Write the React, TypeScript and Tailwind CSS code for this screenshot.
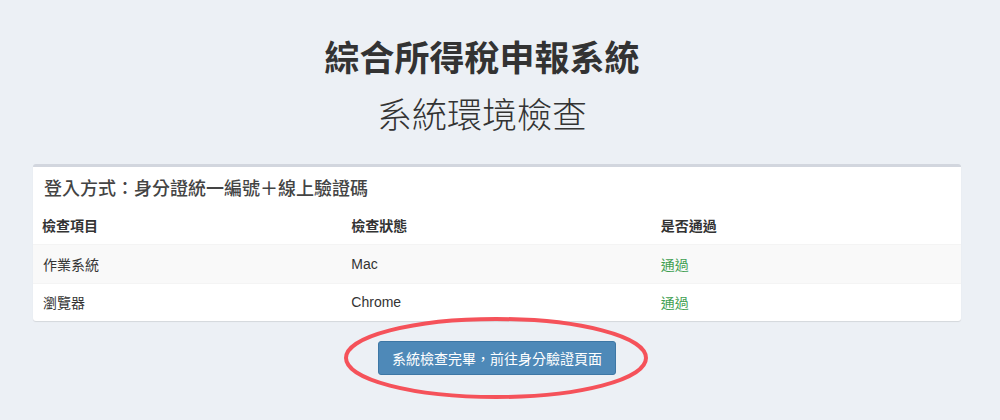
import React from 'react';

const ROWS = [
  { item: '作業系統', status: 'Mac', pass: '通過' },
  { item: '瀏覽器', status: 'Chrome', pass: '通過' },
];

const font = { fontFamily: '"Noto Sans CJK TC", "Liberation Sans", sans-serif' };

export default function App() {
  return (
    <div className="min-h-[420px] w-[1000px] bg-[#ecf0f5] text-[#333]" style={font}>
      <div className="pl-[33px] pr-[39px]">
        {/* Title */}
        <div className="pr-[30px] pt-[33px] text-center">
          <h1 className="text-[35px] font-bold leading-[46px] text-[#333]">綜合所得稅申報系統</h1>
          <h2 className="mt-[11px] text-[35px] font-light leading-[46px] text-[#333]">系統環境檢查</h2>
        </div>

        {/* Box */}
        <div className="mt-[28px] rounded-[3px] border-t-[3px] border-[#d2d6de] bg-white shadow-[0_1px_1px_rgba(0,0,0,0.1)]">
          <div className="flex h-[40px] items-center px-[11px]">
            <h3 className="text-[18px] font-medium leading-none text-[#444]">登入方式：身分證統一編號＋線上驗證碼</h3>
          </div>
          <div className="grid grid-cols-3 text-[14px]">
            {['檢查項目', '檢查狀態', '是否通過'].map((h) => (
              <div key={h} className="flex h-[38px] items-center border-b border-[#f4f4f4] px-[9px] font-bold text-[#333]">
                {h}
              </div>
            ))}
            {ROWS.map((r, i) => (
              <React.Fragment key={r.item}>
                <div className={`flex h-[38px] items-center px-[10px] ${i === 0 ? 'bg-[#f9f9f9]' : 'border-t border-[#f4f4f4]'}`}>{r.item}</div>
                <div className={`flex h-[38px] items-center px-[9px] ${i === 0 ? 'bg-[#f9f9f9]' : 'border-t border-[#f4f4f4]'}`} style={{ fontFamily: '"Liberation Sans", "Noto Sans CJK TC", sans-serif' }}>{r.status}</div>
                <div className={`flex h-[38px] items-center px-[9px] text-[#3f9f52] ${i === 0 ? 'bg-[#f9f9f9]' : 'border-t border-[#f4f4f4]'}`}>{r.pass}</div>
              </React.Fragment>
            ))}
          </div>
        </div>

        {/* Action */}
        <div className="relative mt-[20px] flex justify-center">
          <button className="h-[34px] rounded-[3px] border border-[#3d77a5] bg-[#4e89b8] px-[13px] text-[14px] text-white">
            系統檢查完畢，前往身分驗證頁面
          </button>
          <svg className="pointer-events-none absolute left-[310px] top-[-25px]" width="310" height="86" viewBox="0 0 310 86">
            <ellipse cx="153" cy="42" rx="150" ry="39" fill="none" stroke="#f5525a" strokeWidth="4" />
          </svg>
        </div>
      </div>
    </div>
  );
}
